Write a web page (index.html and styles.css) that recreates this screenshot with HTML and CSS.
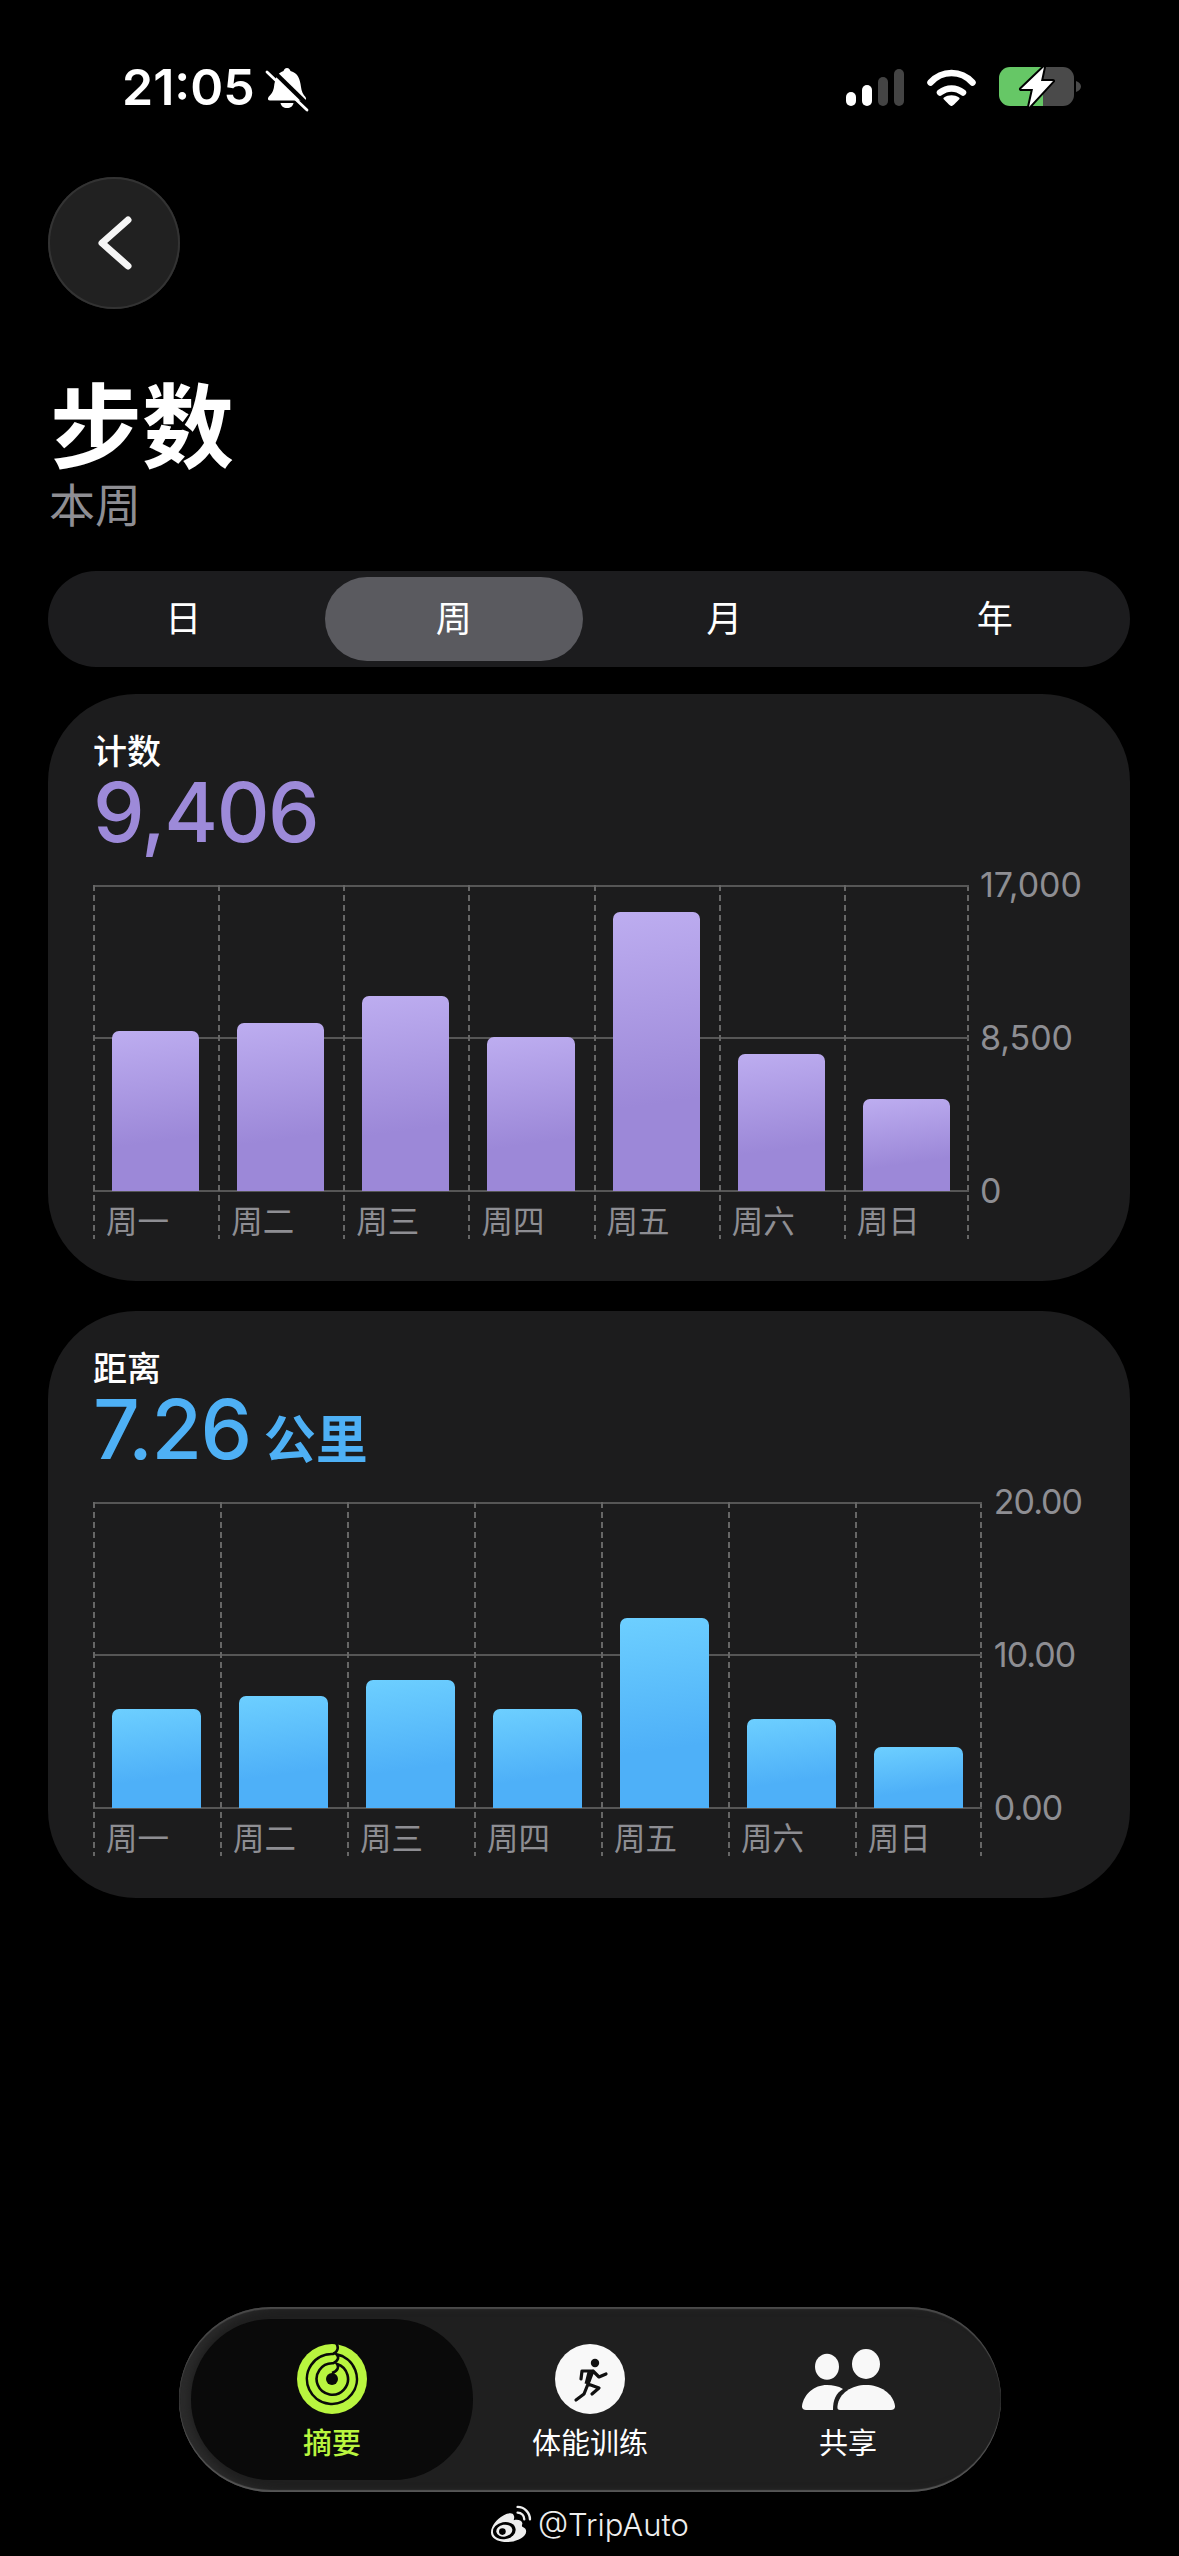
FILE: index.html
```html
<!DOCTYPE html>
<html lang="zh-CN">
<head>
    <meta charset="UTF-8">
    <title>步数</title>
    <link rel="stylesheet" href="styles.css">
</head>
<body>
<div class="screen">
    <div class="status">
        <span class="time">21:05</span>
        <svg class="bell" width="50" height="50" viewBox="0 0 50 50">
            <path fill="#fff" d="M25 6c-2 0-3 1.500-3.500 3C15 11 13 17 12 25c-.8 5-3 7.500-5.500 10C5.300 37 6 38.500 8 38.500h34c2 0 2.700-1.500 1.500-3.500-2.500-2.500-4-5.500-4.500-10-1-8-3-14-10.500-16C28 7.500 27 6 25 6z"/>
            <path fill="#fff" d="M18.500 41h13c-.5 3-3 5-6.500 5s-6-2-6.500-5z"/>
            <path stroke="#000" stroke-width="4.500" d="M8 6l40 39"/>
            <path stroke="#fff" stroke-width="2.800" stroke-linecap="round" d="M5 10l40 38"/>
        </svg>
        <span class="spacer"></span>
        <svg class="signal" width="58" height="37" viewBox="0 0 58 37">
            <rect x="0" y="23" width="10" height="14" rx="5" fill="#fff"/>
            <rect x="16" y="16" width="10" height="21" rx="5" fill="#fff"/>
            <rect x="32" y="8" width="10" height="29" rx="5" fill="#444"/>
            <rect x="48" y="0" width="10" height="37" rx="5" fill="#444"/>
        </svg>
        <svg class="wifi" width="49" height="37" viewBox="0 0 49 37">
            <path fill="none" stroke="#fff" stroke-width="6.500" stroke-linecap="round" d="M3.500 13.500C15 .8 34 .8 45.500 13.500"/>
            <path fill="none" stroke="#fff" stroke-width="6.500" stroke-linecap="round" d="M13 23.500c7-5.500 16-5.500 23 0"/>
            <path fill="#fff" d="M24.500 37c-1 0-1.700-.6-7.500-6.500-.8-.8-.8-1.500 0-2 4.500-3 10.500-3 15 0 .8.500.8 1.200 0 2-5.800 5.900-6.500 6.500-7.500 6.500z"/>
        </svg>
        <svg class="battery" width="84" height="42" viewBox="0 0 84 42">
            <path fill="#66c766" d="M11 1h33v39H11A11 11 0 0 1 0 29V12A11 11 0 0 1 11 1z"/>
            <path fill="#4a4a4a" d="M44 1h20a11 11 0 0 1 11 11v17a11 11 0 0 1-11 11H44z"/>
            <path fill="#4a4a4a" d="M77 15c3 1 5 3 5 5.500S80 25 77 26z"/>
            <path fill="#fff" stroke="#000" stroke-width="4" stroke-linejoin="round" paint-order="stroke" d="M45 1L22 23h12l-4 18 24-26H42z"/>
        </svg>
    </div>

    <button class="back">
        <svg width="40" height="60" viewBox="0 0 40 60">
            <path fill="none" stroke="#f5f5f5" stroke-width="7" stroke-linecap="round" stroke-linejoin="round" d="M34 7L8 30l26 23"/>
        </svg>
    </button>

    <h1 class="title">步数</h1>
    <p class="subtitle">本周</p>

    <div class="segments">
        <span class="seg">日</span>
        <span class="seg seg-on">周</span>
        <span class="seg">月</span>
        <span class="seg">年</span>
    </div>

    <section class="card">
        <div class="card-label">计数</div>
        <div class="card-value purple">9,406</div>
        <div class="chart">
            <div class="plot">
                <div class="day"><div class="slot"><div class="bar bar-purple" style="height:160px"></div></div><span class="day-name">周一</span></div>
                <div class="day"><div class="slot"><div class="bar bar-purple" style="height:168px"></div></div><span class="day-name">周二</span></div>
                <div class="day"><div class="slot"><div class="bar bar-purple" style="height:195px"></div></div><span class="day-name">周三</span></div>
                <div class="day"><div class="slot"><div class="bar bar-purple" style="height:154px"></div></div><span class="day-name">周四</span></div>
                <div class="day"><div class="slot"><div class="bar bar-purple" style="height:279px"></div></div><span class="day-name">周五</span></div>
                <div class="day"><div class="slot"><div class="bar bar-purple" style="height:137px"></div></div><span class="day-name">周六</span></div>
                <div class="day"><div class="slot"><div class="bar bar-purple" style="height:92px"></div></div><span class="day-name">周日</span></div>
            </div>
            <div class="axis">
                <span>17,000</span>
                <span>8,500</span>
                <span>0</span>
            </div>
        </div>
    </section>

    <section class="card card-next">
        <div class="card-label">距离</div>
        <div class="card-value blue">7.26<span class="unit">公里</span></div>
        <div class="chart">
            <div class="plot">
                <div class="day"><div class="slot"><div class="bar bar-blue" style="height:99px"></div></div><span class="day-name">周一</span></div>
                <div class="day"><div class="slot"><div class="bar bar-blue" style="height:112px"></div></div><span class="day-name">周二</span></div>
                <div class="day"><div class="slot"><div class="bar bar-blue" style="height:128px"></div></div><span class="day-name">周三</span></div>
                <div class="day"><div class="slot"><div class="bar bar-blue" style="height:99px"></div></div><span class="day-name">周四</span></div>
                <div class="day"><div class="slot"><div class="bar bar-blue" style="height:190px"></div></div><span class="day-name">周五</span></div>
                <div class="day"><div class="slot"><div class="bar bar-blue" style="height:89px"></div></div><span class="day-name">周六</span></div>
                <div class="day"><div class="slot"><div class="bar bar-blue" style="height:61px"></div></div><span class="day-name">周日</span></div>
            </div>
            <div class="axis axis-tight">
                <span>20.00</span>
                <span>10.00</span>
                <span>0.00</span>
            </div>
        </div>
    </section>

    <nav class="tabbar">
        <div class="tab tab-on">
            <div class="tab-icon">
                <svg width="70" height="70" viewBox="7 7 70 70">
                    <circle cx="42" cy="42" r="35" fill="#b9f53f"/>
                    <circle cx="42" cy="42" r="6" fill="#0a0a0a"/>
                    <path fill="none" stroke="#0a0a0a" stroke-width="2.600" d="M46 6c3 4 2 9-3 11A25 25 0 1 0 46.500 17.400c2.500 2.500 2.500 6-3.500 8.900A15.700 15.700 0 1 0 47 27c2 3 1 7-5 9"/>
                </svg>
            </div>
            <span class="tab-name">摘要</span>
        </div>
        <div class="tab">
            <div class="tab-icon">
                <svg width="70" height="70" viewBox="5 5 70 70">
                    <circle cx="40" cy="40" r="35" fill="#f8f8f8"/>
                    <circle cx="45" cy="24" r="4.200" fill="#111"/>
                    <path fill="none" stroke="#111" stroke-width="3.200" stroke-linecap="round" stroke-linejoin="round" d="M31 40l1-8h11l-5 13 11 4-7 6M43 32l6 6 7-3M38 45l-4 10-8 6"/>
                    <path fill="none" stroke="#111" stroke-width="5" stroke-linejoin="round" d="M40 33l-3 12"/>
                </svg>
            </div>
            <span class="tab-name">体能训练</span>
        </div>
        <div class="tab">
            <div class="tab-icon">
                <svg width="93" height="61" viewBox="0 0 93 61">
                    <ellipse cx="25" cy="17.700" rx="12" ry="13" fill="#f8f8f8"/>
                    <ellipse cx="64" cy="15" rx="14" ry="15" fill="#f8f8f8"/>
                    <path fill="#f8f8f8" d="M4 61h27c0-10 3-17 10-21-5-3-10-4-16-4C12 36 2 45 0 57c-.3 2.500 1.500 4 4 4z"/>
                    <path fill="#f8f8f8" d="M38 61h51c2.500 0 4.300-1.500 4-4-2-13-15-21-29-21s-27 8-28.500 21c-.2 2.500 0 4 2.500 4z"/>
                </svg>
            </div>
            <span class="tab-name">共享</span>
        </div>
    </nav>

    <div class="mark">
        <svg width="44" height="38" viewBox="3 8 44 40">
            <path fill="#eee" d="M5 37c0-7 6-14 13-18 6-3 10-3 11 0 1 2 0 4 0 5 4-1 8 0 9 3 0 2-1 3 0 4 3 1 4 3 4 5 0 6-10 11-20 11S5 43 5 37z"/>
            <ellipse cx="19" cy="35" rx="12" ry="9" fill="#000" transform="rotate(-10 19 35)"/>
            <ellipse cx="19" cy="35" rx="8.500" ry="6.200" fill="#eee" transform="rotate(-10 19 35)"/>
            <circle cx="17" cy="36" r="3.500" fill="#000"/>
            <path fill="none" stroke="#eee" stroke-width="2.500" stroke-linecap="round" d="M33 10c7 0 13 6 13 13M33 16c4 0 7 3 7 7"/>
        </svg>
        <span>@TripAuto</span>
    </div>
</div>
</body>
</html>
```

FILE: styles.css
```css
* {
    box-sizing: border-box;
}
body {
    margin: 0;
    background-color: #000;
    color: #fff;
    font-family: Inter, "Noto Sans CJK SC", sans-serif;
}
.screen {
    width: 1179px;
    height: 2556px;
    padding: 66px 49px 0 48px;
    display: flex;
    flex-direction: column;
    overflow: hidden;
}

/* status bar */
.status {
    height: 42px;
    padding: 0 47px 0 74px;
    display: flex;
    align-items: center;
}
.time {
    font-size: 50px;
    font-weight: 600;
    line-height: 42px;
}
.bell {
    margin-left: 7px;
}
.spacer {
    flex: 1;
}
.signal {
    margin-right: 23px;
}
.wifi {
    margin-right: 23px;
}

/* header */
.back {
    width: 132px;
    height: 132px;
    margin-top: 69px;
    padding: 0;
    border: none;
    border-radius: 50%;
    background-color: #212121;
    box-shadow: inset 0 0 0 2px #333;
    display: flex;
    align-items: center;
    justify-content: center;
}
.title {
    margin: 69px 0 0 2px;
    font-size: 92px;
    font-weight: 700;
    line-height: 100px;
}
.subtitle {
    margin: -1px 0 0 1px;
    font-size: 46px;
    line-height: 56px;
    color: #8e8e93;
}

/* day / week / month / year */
.segments {
    height: 96px;
    margin-top: 38px;
    border-radius: 48px;
    background-color: #1c1c1e;
    display: grid;
    grid-template-columns: repeat(4, 1fr);
}
.seg {
    margin: 6px;
    border-radius: 42px;
    font-size: 36px;
    line-height: 84px;
    text-align: center;
}
.seg-on {
    background-color: #5a5a5f;
}

/* cards */
.card {
    margin-top: 27px;
    padding: 38px 48px 42px 45px;
    border-radius: 88px;
    background-color: #1c1c1d;
}
.card-next {
    margin-top: 30px;
}
.card-label {
    height: 40px;
    font-size: 34px;
    font-weight: 500;
    line-height: 40px;
}
.card-value {
    height: 80px;
    font-size: 82px;
    font-weight: 500;
    line-height: 82px;
    letter-spacing: -1.5px;
}
.purple {
    color: #9d8ad9;
}
.blue {
    color: #4eb0f5;
}
.unit {
    margin-left: 13px;
    font-size: 52px;
    font-weight: 700;
    line-height: 0;
    letter-spacing: 0;
}

/* charts */
.chart {
    margin-top: 33px;
    display: flex;
    align-items: flex-start;
}
.plot {
    flex: 1;
    display: grid;
    grid-template-columns: repeat(7, 1fr);
    background:
        linear-gradient(#565656, #565656) 0 0 / 100% 2px no-repeat,
        linear-gradient(#565656, #565656) 0 152px / 100% 2px no-repeat,
        linear-gradient(#565656, #565656) 0 305px / 100% 2px no-repeat,
        repeating-linear-gradient(to bottom, #666 0 6px, transparent 6px 10px) right top / 2px 100% no-repeat;
}
.day {
    height: 354px;
    background: repeating-linear-gradient(to bottom, #666 0 6px, transparent 6px 10px) left top / 2px 100% no-repeat;
}
.slot {
    height: 306px;
    padding: 0 19px;
    display: flex;
    align-items: flex-end;
}
.bar {
    width: 100%;
    border-radius: 7px 7px 0 0;
}
.bar-purple {
    background: linear-gradient(172deg, #bdadf0, #9c88d8 68%);
}
.bar-blue {
    background: linear-gradient(172deg, #6dcfff, #4eb0f8 68%);
}
.day-name {
    display: block;
    padding: 14px 0 0 13px;
    font-size: 31.5px;
    line-height: 34px;
    color: #8e8e93;
}
.axis {
    height: 306px;
    margin-left: 11px;
    display: flex;
    flex-direction: column;
    justify-content: space-between;
    font-size: 34px;
    color: #8e8e93;
}
.axis-tight {
    margin-left: 12px;
    letter-spacing: -1px;
}
.axis span {
    height: 0;
    line-height: 0;
}

/* tab bar */
.tabbar {
    width: 822px;
    height: 185px;
    margin: auto 0 0 131px;
    padding: 12px;
    border-radius: 92px;
    background-color: #1f1f1f;
    box-shadow: inset 0 2px 1px #4a4a4a, inset 0 -2px 1px #555, inset 10px 0 8px #2b2b2b;
    display: grid;
    grid-template-columns: 282px 234px 282px;
}
.tab {
    padding-top: 25px;
    border-radius: 80px;
    display: flex;
    flex-direction: column;
    align-items: center;
}
.tab-on {
    background-color: #0a0a0a;
    color: #b9f53f;
}
.tab-icon {
    height: 70px;
    display: flex;
    align-items: center;
}
.tab-name {
    margin-top: 12px;
    font-size: 29px;
    font-weight: 400;
    line-height: 36px;
}
.tab-on .tab-name {
    font-weight: 500;
}

/* watermark */
.mark {
    height: 64px;
    padding-left: 440px;
    display: flex;
    align-items: center;
    gap: 6px;
    font-size: 31px;
    font-weight: 300;
    color: #eee;
}
```
